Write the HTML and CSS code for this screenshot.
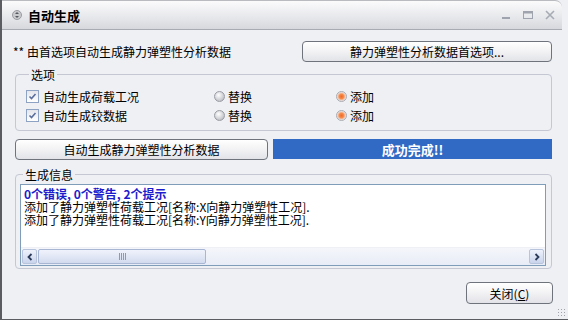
FILE: index.html
```html
<!DOCTYPE html>
<html lang="zh">
<head>
  <meta charset="UTF-8">
  <title>自动生成</title>
  <link rel="stylesheet" href="styles.css">
</head>
<body>
<div class="window">
  <div class="titlebar">
    <svg class="app-icon" width="10" height="10" viewBox="0 0 10 10">
      <circle cx="5" cy="5" r="4.5" fill="#c8cace" stroke="#9a9ca2"/>
      <path d="M3 4 L5 2 L7 4 Z M3 6 L5 8 L7 6 Z" fill="#55585e"/>
    </svg>
    <span class="title">自动生成</span>
    <div class="controls">
      <span class="ctl">
        <svg width="12" height="12" viewBox="0 0 12 12"><rect x="2" y="8" width="8" height="2" fill="#9ea3ad"/></svg>
      </span>
      <span class="ctl">
        <svg width="12" height="12" viewBox="0 0 12 12"><rect x="1.5" y="2.5" width="9" height="7" fill="none" stroke="#9ea3ad"/><rect x="1.5" y="2.5" width="9" height="2" fill="#9ea3ad"/></svg>
      </span>
      <span class="ctl">
        <svg width="12" height="12" viewBox="0 0 12 12"><path d="M2 2 L10 10 M10 2 L2 10" stroke="#a6abb4" stroke-width="1.6"/></svg>
      </span>
    </div>
  </div>

  <div class="content">
    <div class="top-row">
      <span class="intro">** 由首选项自动生成静力弹塑性分析数据</span>
      <button class="btn pref-btn">静力弹塑性分析数据首选项...</button>
    </div>

    <fieldset class="group options">
      <legend>选项</legend>
      <div class="opt-row">
        <label class="check"><span class="box"><svg width="9" height="9" viewBox="0 0 9 9"><path d="M1.5 4.5 L3.5 6.5 L7.5 2" fill="none" stroke="#5a6e9c" stroke-width="1.6"/></svg></span>自动生成荷载工况</label>
        <label class="radio"><span class="dot"></span>替换</label>
        <label class="radio"><span class="dot on"></span>添加</label>
      </div>
      <div class="opt-row">
        <label class="check"><span class="box"><svg width="9" height="9" viewBox="0 0 9 9"><path d="M1.5 4.5 L3.5 6.5 L7.5 2" fill="none" stroke="#5a6e9c" stroke-width="1.6"/></svg></span>自动生成铰数据</label>
        <label class="radio"><span class="dot"></span>替换</label>
        <label class="radio"><span class="dot on"></span>添加</label>
      </div>
    </fieldset>

    <div class="action-row">
      <button class="btn gen-btn">自动生成静力弹塑性分析数据</button>
      <div class="status">成功完成!!</div>
    </div>

    <fieldset class="group info">
      <legend>生成信息</legend>
      <div class="log">
        <div class="log-text">
          <div class="summary">0个错误, 0个警告, 2个提示</div>
          <div>添加了静力弹塑性荷载工况[名称:X向静力弹塑性工况].</div>
          <div>添加了静力弹塑性荷载工况[名称:Y向静力弹塑性工况].</div>
        </div>
        <div class="hscroll">
          <span class="arrow">
            <svg width="8" height="8" viewBox="0 0 8 8"><path d="M5.5 1 L2.5 4 L5.5 7" fill="none" stroke="#2c3a5a" stroke-width="1.8"/></svg>
          </span>
          <span class="thumb"><span class="grip"></span></span>
          <span class="track"></span>
          <span class="arrow">
            <svg width="8" height="8" viewBox="0 0 8 8"><path d="M2.5 1 L5.5 4 L2.5 7" fill="none" stroke="#2c3a5a" stroke-width="1.8"/></svg>
          </span>
        </div>
      </div>
    </fieldset>

    <div class="bottom-row">
      <button class="btn close-btn">关闭(<u>C</u>)</button>
    </div>
  </div>
  <span class="resize-grip"></span>
</div>
</body>
</html>
```

FILE: styles.css
```css
body {
  margin: 0;
  font-family: "Noto Sans CJK SC", "Liberation Sans", sans-serif;
  font-size: 12px;
  color: #000;
  background: #f4f5f8;
}
.window {
  position: relative;
  width: 566px;
  height: 319px;
  border-left: 2px solid #5a5c62;
  border-bottom: 1px solid #5a5c62;
  background: #eff0f4;
}
.titlebar {
  height: 28px;
  margin-right: 6px;
  display: flex;
  align-items: center;
  background: linear-gradient(#fbfbfc, #e6e7ea 60%, #d6d8dd);
  border-bottom: 1px solid #a8abb2;
  border-top-right-radius: 7px;
  border-top: 1px solid #b9bbc0;
}
.app-icon {
  margin-left: 10px;
}
.title {
  margin-left: 6px;
  font-size: 13px;
  font-weight: bold;
}
.controls {
  margin-left: auto;
  margin-right: 6px;
  display: flex;
  gap: 10px;
}
.ctl {
  width: 12px;
  height: 12px;
  display: flex;
}
.content {
  padding: 11px 14px 0 11px;
  display: flex;
  flex-direction: column;
}
.top-row {
  display: flex;
  align-items: center;
  justify-content: space-between;
  height: 21px;
  padding-right: 2px;
}
.btn {
  font-family: inherit;
  font-size: 12px;
  height: 21px;
  padding: 0;
  background: linear-gradient(#ffffff, #f2f2f4 50%, #e2e3e8);
  border: 1px solid #6f737c;
  border-radius: 4px;
  color: #000;
}
.pref-btn {
  width: 250px;
}
.group {
  margin: 0 2px 0 2px;
  border: 1px solid #c5c8d2;
  border-radius: 4px;
  padding: 0;
}
.group legend {
  padding: 0 2px;
  margin-left: 3px;
  line-height: 13px;
}
.options {
  margin-top: 6px;
  height: 63px;
  padding: 6px 0 0 10px;
  box-sizing: border-box;
}
.opt-row {
  display: flex;
  align-items: center;
  height: 19px;
}
.check {
  display: flex;
  align-items: center;
  width: 188px;
}
.box {
  width: 11px;
  height: 11px;
  border: 1px solid #8ea2c4;
  background: linear-gradient(#e4e6ec, #ffffff);
  display: flex;
  align-items: center;
  justify-content: center;
  margin-right: 4px;
}
.radio {
  display: flex;
  align-items: center;
  width: 122px;
}
.dot {
  width: 11px;
  height: 11px;
  border-radius: 50%;
  border: 1px solid #9a9ca4;
  background: radial-gradient(circle at 40% 35%, #ffffff, #c4c6cc 70%, #a8aab0);
  margin-right: 3px;
  box-sizing: border-box;
}
.dot.on {
  background: radial-gradient(circle, #f26a2a 0, #f58a4a 35%, #f3c0a4 55%, #e4e6ec 70%);
  border-color: #a9abb2;
}
.action-row {
  display: flex;
  gap: 5px;
  margin: 8px 2px 0 2px;
  height: 21px;
}
.gen-btn {
  width: 253px;
}
.status {
  flex: 1;
  height: 20px;
  background: #316ac5;
  color: #fff;
  font-weight: bold;
  font-size: 13px;
  display: flex;
  align-items: center;
  justify-content: center;
}
.info {
  margin-top: 8px;
  height: 101px;
  padding: 3px 5px 0 4px;
  box-sizing: border-box;
}
.log {
  height: 80px;
  background: #fff;
  border: 1px solid #7f9db9;
  display: flex;
  flex-direction: column;
}
.log-text {
  flex: 1;
  padding: 2px 0 0 3px;
  line-height: 13px;
  white-space: nowrap;
}
.summary {
  color: #1c1ccd;
  font-weight: bold;
}
.hscroll {
  height: 17px;
  display: flex;
  background: linear-gradient(#f4f6fb, #e8ecf6);
  border-top: 1px solid #eef0f6;
}
.arrow {
  width: 15px;
  height: 15px;
  margin: 1px;
  border: 1px solid #b8c4dc;
  border-radius: 2px;
  box-sizing: border-box;
  background: linear-gradient(#eef2fb, #c9d4ec);
  display: flex;
  align-items: center;
  justify-content: center;
}
.thumb {
  width: 166px;
  margin: 1px 0;
  border: 1px solid #a8b6d4;
  border-radius: 2px;
  background: linear-gradient(#f0f3fb, #d2dbee);
  display: flex;
  align-items: center;
  justify-content: center;
}
.grip {
  width: 7px;
  height: 7px;
  background: repeating-linear-gradient(90deg, #8c9ab8 0 1px, transparent 1px 2px);
}
.track {
  flex: 1;
}
.bottom-row {
  display: flex;
  justify-content: flex-end;
  margin-top: 13px;
  margin-right: 1px;
}
.close-btn {
  width: 87px;
  height: 22px;
}
.close-btn u {
  text-decoration: underline;
}
.resize-grip {
  position: absolute;
  right: 1px;
  bottom: 1px;
  width: 10px;
  height: 10px;
  background: radial-gradient(circle, #a0a3aa 0.8px, transparent 1px) 0 0 / 3px 3px;
}
```
